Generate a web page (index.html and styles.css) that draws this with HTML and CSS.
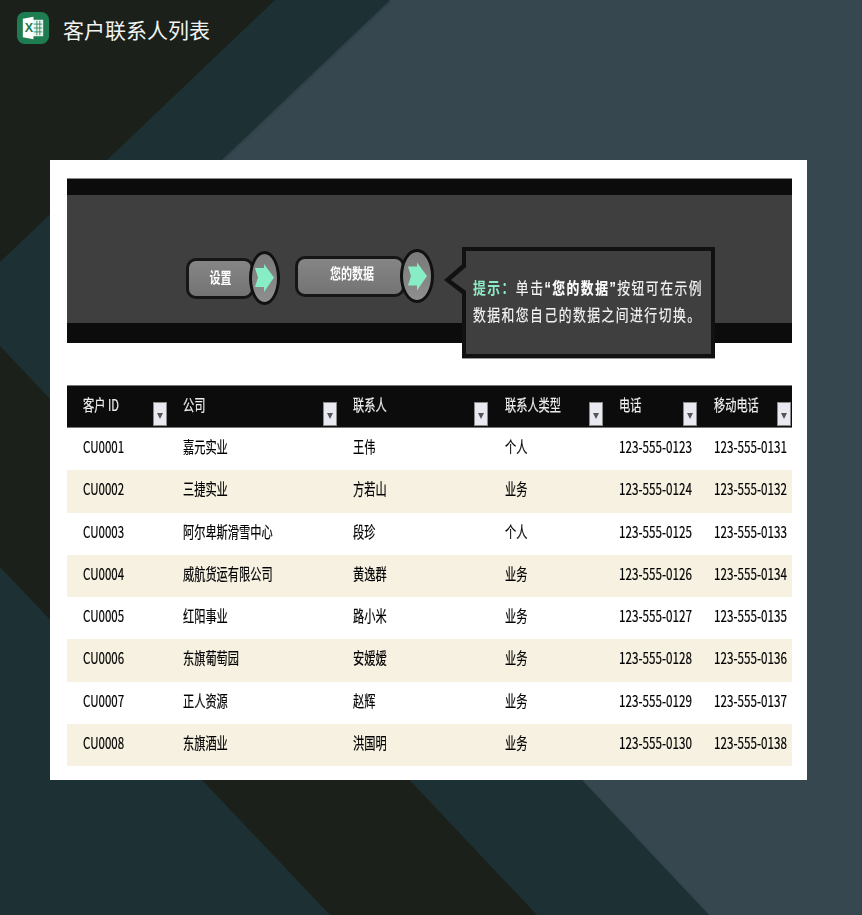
FILE: index.html
```html
<!DOCTYPE html>
<html lang="zh-CN">
<head>
<meta charset="utf-8">
<title>客户联系人列表</title>
<link rel="stylesheet" href="styles.css">
</head>
<body>
<svg class="backdrop" width="862" height="915" viewBox="0 0 862 915" aria-hidden="true">
  <polygon class="teal" points="0,0 390,0 104,272 709,915 0,915"/>
  <polygon class="dark" points="0,0 275,0 0,262"/>
  <polygon class="dark" points="0,346 537,915 330,915 0,567"/>
</svg>
<div class="page">
  <header class="top">
    <svg class="xl" width="32" height="32" viewBox="0 0 33 33" aria-hidden="true">
      <rect width="33" height="33" rx="8" fill="#1d7c50"/>
      <rect x="16" y="8" width="11" height="17" fill="#e9f3ee"/>
      <path d="M17 12.500h9M17 16.500h9M17 20.500h9M20.500 9v15M23.500 9v15" stroke="#1d7c50" stroke-width=".8" fill="none"/>
      <polygon points="6,7 17,5 17,28 6,26" fill="#fff"/>
      <text x="8" y="21" class="xl-x">X</text>
    </svg>
    <h1 class="title">客户联系人列表</h1>
  </header>
  <main class="card">
    <section class="banner">
      <div class="btn btn-a">
        <div class="pill pill-a"><span class="pill-t">设置</span></div>
        <div class="knob knob-a"><svg width="19" height="28" viewBox="0 0 19 28"><polygon points="0,4 9,4 9,0 19,13.500 9,28 9,23 0,23 3,13.500" fill="#86edc4"/></svg></div>
      </div>
      <div class="btn btn-b">
        <div class="pill pill-b"><span class="pill-t">您的数据</span></div>
        <div class="knob knob-b"><svg width="19" height="29" viewBox="0 0 19 28"><polygon points="0,4 9,4 9,0 19,13.500 9,28 9,23 0,23 3,13.500" fill="#86edc4"/></svg></div>
      </div>
      <aside class="tip">
        <svg class="caret" width="24" height="38" viewBox="0 0 24 38" aria-hidden="true"><polygon points="24,0 2,19 24,36" fill="#111"/><polygon points="24,6 9,19 24,30" fill="#3f3f3f"/></svg>
        <p class="tip-line"><span class="tip-t"><b class="hint">提示：</b>单击<b>“您的数据”</b>按钮可在示例</span></p>
        <p class="tip-line"><span class="tip-t">数据和您自己的数据之间进行切换。</span></p>
      </aside>
    </section>
    <section class="table">
      <div class="row head">
        <div class="cell"><span class="t">客户 ID</span><i class="filter"></i></div>
        <div class="cell"><span class="t">公司</span><i class="filter"></i></div>
        <div class="cell"><span class="t">联系人</span><i class="filter"></i></div>
        <div class="cell"><span class="t">联系人类型</span><i class="filter"></i></div>
        <div class="cell"><span class="t">电话</span><i class="filter"></i></div>
        <div class="cell"><span class="t">移动电话</span><i class="filter"></i></div>
      </div>
      <div class="row"><div class="cell"><span class="t">CU0001</span></div><div class="cell"><span class="t">嘉元实业</span></div><div class="cell"><span class="t">王伟</span></div><div class="cell"><span class="t">个人</span></div><div class="cell"><span class="t">123-555-0123</span></div><div class="cell"><span class="t">123-555-0131</span></div></div>
      <div class="row"><div class="cell"><span class="t">CU0002</span></div><div class="cell"><span class="t">三捷实业</span></div><div class="cell"><span class="t">方若山</span></div><div class="cell"><span class="t">业务</span></div><div class="cell"><span class="t">123-555-0124</span></div><div class="cell"><span class="t">123-555-0132</span></div></div>
      <div class="row"><div class="cell"><span class="t">CU0003</span></div><div class="cell"><span class="t">阿尔卑斯滑雪中心</span></div><div class="cell"><span class="t">段珍</span></div><div class="cell"><span class="t">个人</span></div><div class="cell"><span class="t">123-555-0125</span></div><div class="cell"><span class="t">123-555-0133</span></div></div>
      <div class="row"><div class="cell"><span class="t">CU0004</span></div><div class="cell"><span class="t">威航货运有限公司</span></div><div class="cell"><span class="t">黄逸群</span></div><div class="cell"><span class="t">业务</span></div><div class="cell"><span class="t">123-555-0126</span></div><div class="cell"><span class="t">123-555-0134</span></div></div>
      <div class="row"><div class="cell"><span class="t">CU0005</span></div><div class="cell"><span class="t">红阳事业</span></div><div class="cell"><span class="t">路小米</span></div><div class="cell"><span class="t">业务</span></div><div class="cell"><span class="t">123-555-0127</span></div><div class="cell"><span class="t">123-555-0135</span></div></div>
      <div class="row"><div class="cell"><span class="t">CU0006</span></div><div class="cell"><span class="t">东旗葡萄园</span></div><div class="cell"><span class="t">安嫒嫒</span></div><div class="cell"><span class="t">业务</span></div><div class="cell"><span class="t">123-555-0128</span></div><div class="cell"><span class="t">123-555-0136</span></div></div>
      <div class="row"><div class="cell"><span class="t">CU0007</span></div><div class="cell"><span class="t">正人资源</span></div><div class="cell"><span class="t">赵辉</span></div><div class="cell"><span class="t">业务</span></div><div class="cell"><span class="t">123-555-0129</span></div><div class="cell"><span class="t">123-555-0137</span></div></div>
      <div class="row"><div class="cell"><span class="t">CU0008</span></div><div class="cell"><span class="t">东旗酒业</span></div><div class="cell"><span class="t">洪国明</span></div><div class="cell"><span class="t">业务</span></div><div class="cell"><span class="t">123-555-0130</span></div><div class="cell"><span class="t">123-555-0138</span></div></div>
    </section>
  </main>
</div>
</body>
</html>
```
FILE: styles.css
```css
* { box-sizing: border-box; }
html, body { margin: 0; padding: 0; height: 915px; overflow: hidden; }
body {
  position: relative;
  background: #36474f;
  font-family: "Noto Sans CJK SC", "Noto Sans", sans-serif;
}
.backdrop { position: absolute; left: 0; top: 0; display: block; }
.teal { fill: #1d3135; filter: drop-shadow(1px 1px 1px rgba(0,0,0,.15)); }
.dark { fill: #1b201a; }
.page { position: relative; display: flex; flex-direction: column; height: 915px; }

.top { display: flex; align-items: flex-start; height: 160px; padding: 12px 0 0 17px; }
.xl { display: block; }
.xl-x { font: bold 13px "Liberation Sans", sans-serif; fill: #1d7c50; }
.title { margin: 2px 0 0 14px; font-size: 21px; line-height: 30px; font-weight: 400; color: #f1f3f3; }

.card {
  width: 757px;
  height: 620px;
  margin-left: 50px;
  padding: 18px 15px 14px 17px;
  background: #fff;
}

.banner {
  display: flex;
  align-items: flex-start;
  height: 165px;
  padding: 68px 0 0 119px;
  border-top: 1px solid #8a8a8a;
  background: linear-gradient(#0c0c0c 16px, #3f3f3f 16px, #3f3f3f 144px, #0c0c0c 144px);
}
.btn { display: flex; flex: none; align-items: center; height: 54px; }
.btn-a { margin-top: 4px; }
.btn-b { margin: 2px 0 0 15px; }
.pill {
  display: flex;
  flex: none;
  align-items: center;
  justify-content: center;
  height: 41px;
  border: 3px solid #161616;
  border-radius: 10px;
  background: linear-gradient(#858585, #747474);
}
.pill-a { width: 68px; padding-bottom: 3px; }
.pill-b { width: 110px; padding: 0 0 6px 4px; }
.pill-t { display: inline-block; transform: scaleX(.76); font-size: 14.500px; line-height: 18px; font-weight: 700; color: #fff; white-space: nowrap; }
.knob {
  display: flex;
  flex: none;
  align-items: center;
  justify-content: center;
  height: 54px;
  margin-left: -5px;
  border: 3px solid #111;
  border-radius: 50%;
  background: linear-gradient(#7a7a7a, #8e8e8e);
}
.knob-a { width: 31px; }
.knob-b { width: 34px; }

.tip {
  position: relative;
  flex: none;
  width: 253px;
  height: 111px;
  margin-left: 28px;
  padding: 23px 0 0 7px;
  border: 4px solid #111;
  background: #3f3f3f;
  box-shadow: 0 1px 0 #999;
}
.caret { position: absolute; left: -24px; top: 10px; display: block; }
.tip-line { margin: 0; height: 27px; line-height: 27px; white-space: nowrap; }
.tip-t {
  display: inline-block;
  transform: scaleX(.8);
  transform-origin: left center;
  font-family: "Liberation Sans", "Noto Sans CJK SC", sans-serif;
  font-size: 16px;
  letter-spacing: 1.850px;
  color: #f2f2f2;
  -webkit-text-stroke: .2px #f2f2f2;
}
.tip-t b { font-weight: 700; color: #fff; }
.tip-t .hint { color: #8de9c3; -webkit-text-stroke: 0; }

.table { margin-top: 42px; }
.row {
  display: grid;
  grid-template-columns: 101px 170px 151px 115px 94px 94px;
  height: 42.25px;
  align-items: center;
  color: #000;
}
.row:nth-child(odd) { background: #f6f1e1; }
.row.head { height: 43px; background: #0c0c0c; border-top: 1px solid #777; border-bottom: 1px solid #777; color: #eee; }
.cell { display: flex; align-items: center; height: 100%; padding: 0 1px 6px 15px; min-width: 0; }
.cell:nth-child(1), .cell:nth-child(4), .cell:nth-child(6) { padding-left: 16px; }
.t {
  display: inline-block;
  flex: none;
  width: 10px;
  transform: scaleX(.7);
  transform-origin: left center;
  font-size: 16px;
  line-height: 24px;
  white-space: nowrap;
  -webkit-text-stroke: .2px currentColor;
}
.row:not(.head) .cell:nth-child(1) .t { transform: scaleX(.72); }
.row:not(.head) .cell:nth-child(n+5) .t { transform: scaleX(.73); }
.head .cell { padding-bottom: 5px; position: relative; }
.filter {
  position: absolute;
  right: 1px;
  bottom: 1px;
  width: 14px;
  height: 24px;
  background: #e9e9f1;
  border: 1px solid #8a8a8a;
}
.filter::after {
  content: "";
  position: absolute;
  left: 3px;
  top: 10px;
  border-left: 3px solid transparent;
  border-right: 3px solid transparent;
  border-top: 6px solid #555;
}
```
